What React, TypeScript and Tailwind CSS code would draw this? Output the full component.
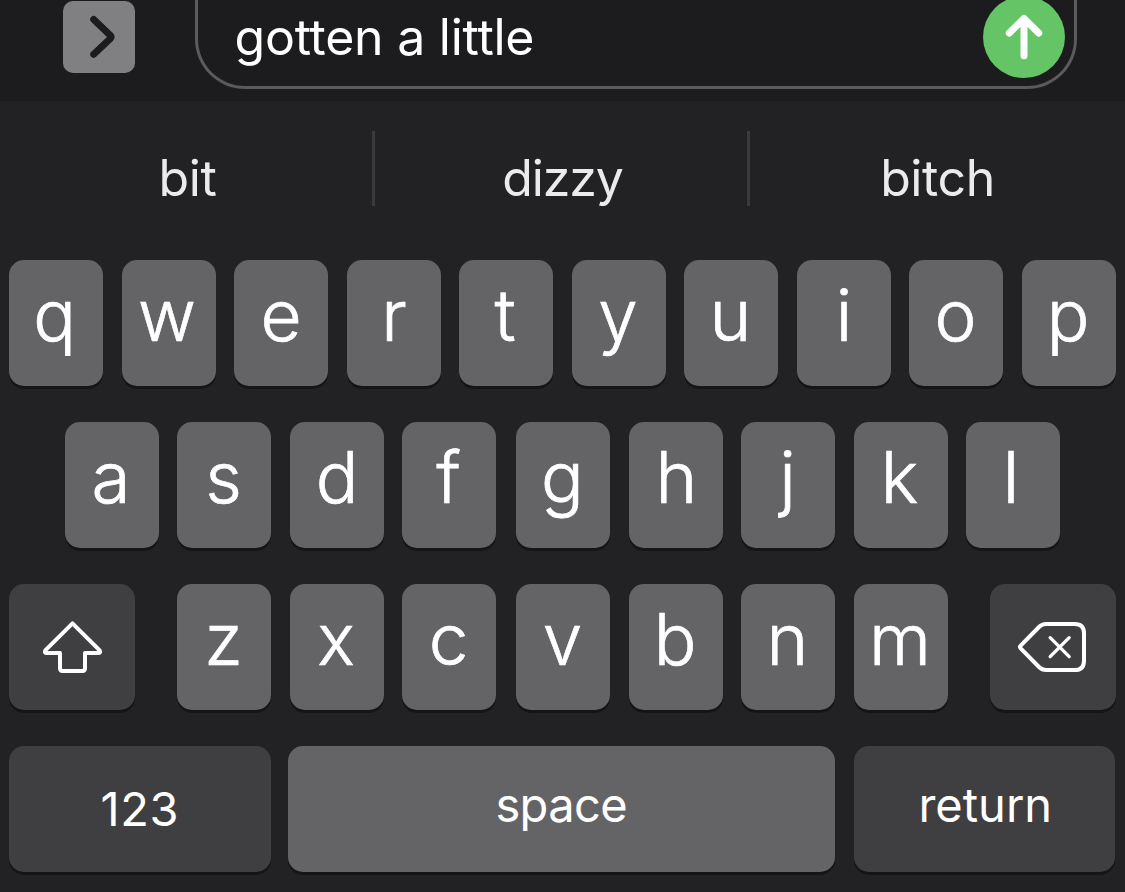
import type { ReactNode } from 'react';

const topRow = [..."qwertyuiop"];
const homeLeft = [..."asdf"];
const homeRight = [..."ghjkl"];
const bottomLeft = [..."zxc"];
const bottomRight = [..."vbnm"];

// Optical corrections for glyphs whose side bearings are uneven.
const nudge: Record<string, string> = {
  q: 'pr-[3px]',
  w: 'pr-[3px]',
  t: 'pr-[2px]',
  l: 'pr-[4px]',
  i: 'pl-px',
  k: 'pr-[2px]',
  h: 'pl-[2px]',
  e: 'pr-0',
  r: 'pl-px',
  d: 'pl-px',
};

function LetterKey({ char }: { char: string }) {
  return (
    <button
      className={`h-[126px] w-[94px] shrink-0 rounded-[15px] bg-[#646466] pb-4 text-center text-[71px] leading-[110px] font-light text-white shadow-[0_3px_0_#151517] [-webkit-text-stroke:0.7px_white] ${nudge[char] ?? 'pr-px'}`}
    >
      {char}
    </button>
  );
}

function LetterGroup({ letters }: { letters: string[] }) {
  return (
    <div className="flex gap-[18.5px]">
      {letters.map((char) => (
        <LetterKey key={char} char={char} />
      ))}
    </div>
  );
}

function DarkKey({ className, label, children }: { className: string; label?: string; children: ReactNode }) {
  return (
    <button
      aria-label={label}
      className={`h-[126px] shrink-0 rounded-[15px] bg-[#3f3f41] text-white shadow-[0_3px_0_#151517] ${className}`}
    >
      {children}
    </button>
  );
}

function ShiftIcon() {
  return (
    <svg className="size-[126px]" viewBox="27 42 378 378" fill="none" stroke="currentColor" strokeWidth="12" strokeLinejoin="round">
      <path d="M217.500 160L136 241Q132 249 139 249H180V295Q180 303 188 303H247Q255 303 255 295V249H296Q303 249 299 241Z" />
    </svg>
  );
}

function DeleteIcon() {
  return (
    <svg className="size-[126px]" viewBox="720 42 378 378" fill="none" stroke="currentColor" strokeWidth="12" strokeLinejoin="round" strokeLinecap="round">
      <path d="M812 227L867 171Q876 162 888 162H974Q1002 162 1002 190V272Q1002 300 974 300H888Q876 300 867 291L812 235Q808 231 812 227Z" />
      <path strokeWidth="10" d="M900.500 203L957.500 260M957.500 203L900.500 260" />
    </svg>
  );
}

export default function App() {
  return (
    <div className="flex h-[892px] w-[1125px] flex-col overflow-hidden bg-[#222224] font-['Inter',sans-serif]">
      <header className="flex h-[101px] shrink-0 items-start bg-[#1c1c1e] pl-[63px]">
        <button aria-label="Show apps" className="mt-px mr-[60px] size-[72px] rounded-[10px] bg-[#808082]">
          <svg className="size-[72px]" viewBox="63 1 72 72" fill="none" stroke="#1c1c1e" strokeWidth="7" strokeLinecap="round" strokeLinejoin="round">
            <path d="M93.700 19.500L110.200 35.200Q112 37 110.200 38.800L93.700 54.300" />
          </svg>
        </button>
        <div className="flex h-[89px] w-[882px] items-start justify-between rounded-b-[50px] border-x-[3px] border-b-[3px] border-[#5b5b5e] pr-[9px] pl-[36.5px]">
          <span className="text-[50px] leading-[74px] tracking-[-0.25px] text-white">gotten a little</span>
          <button aria-label="Send" className="-mt-1 size-[82px] rounded-full bg-[#65c466]">
            <svg className="size-[82px]" viewBox="983 -4 82 82" fill="none" stroke="white" strokeWidth="7" strokeLinecap="round" strokeLinejoin="round">
              <path d="M1024 18.500V55.800M1009.300 33L1024 18.500L1038.700 33" />
            </svg>
          </button>
        </div>
      </header>

      <section className="grid h-[159px] shrink-0 grid-cols-3 pt-[30px] text-center text-[50px] leading-[94px] font-[370] text-[#ebebed]">
        <div className="h-[75px] border-r-[3px] border-[#3a3a3c] pl-[3px] tracking-[-0.4px]">bit</div>
        <div className="h-[75px] border-r-[3px] border-[#3a3a3c] pl-[3px] tracking-[-1.1px]">dizzy</div>
        <div className="h-[75px] tracking-[-0.4px]">bitch</div>
      </section>

      <main className="flex flex-col gap-9">
        <div className="pl-[9px]">
          <LetterGroup letters={topRow} />
        </div>
        <div className="flex gap-5 pl-[64.5px]">
          <LetterGroup letters={homeLeft} />
          <LetterGroup letters={homeRight} />
        </div>
        <div className="flex pl-[9px]">
          <DarkKey className="mr-[42px] w-[126px]" label="Shift">
            <ShiftIcon />
          </DarkKey>
          <div className="mr-[42.5px] flex gap-5">
            <LetterGroup letters={bottomLeft} />
            <LetterGroup letters={bottomRight} />
          </div>
          <DarkKey className="w-[126px]" label="Delete">
            <DeleteIcon />
          </DarkKey>
        </div>
        <div className="flex pl-[9px]">
          <DarkKey className="w-[261.5px] text-[47px] leading-[126px] font-[370] tracking-[0.6px]">123</DarkKey>
          <button className="mr-[19px] ml-[17.500px] h-[126px] w-[546.5px] rounded-[15px] bg-[#646466] pb-[8px] text-[47px] leading-[118px] font-[380] tracking-[-0.6px] text-white shadow-[0_3px_0_#151517]">
            space
          </button>
          <DarkKey className="w-[261.500px] pb-[8px] pl-[2px] text-[47px] leading-[118px] font-[380]">return</DarkKey>
        </div>
      </main>
    </div>
  );
}
